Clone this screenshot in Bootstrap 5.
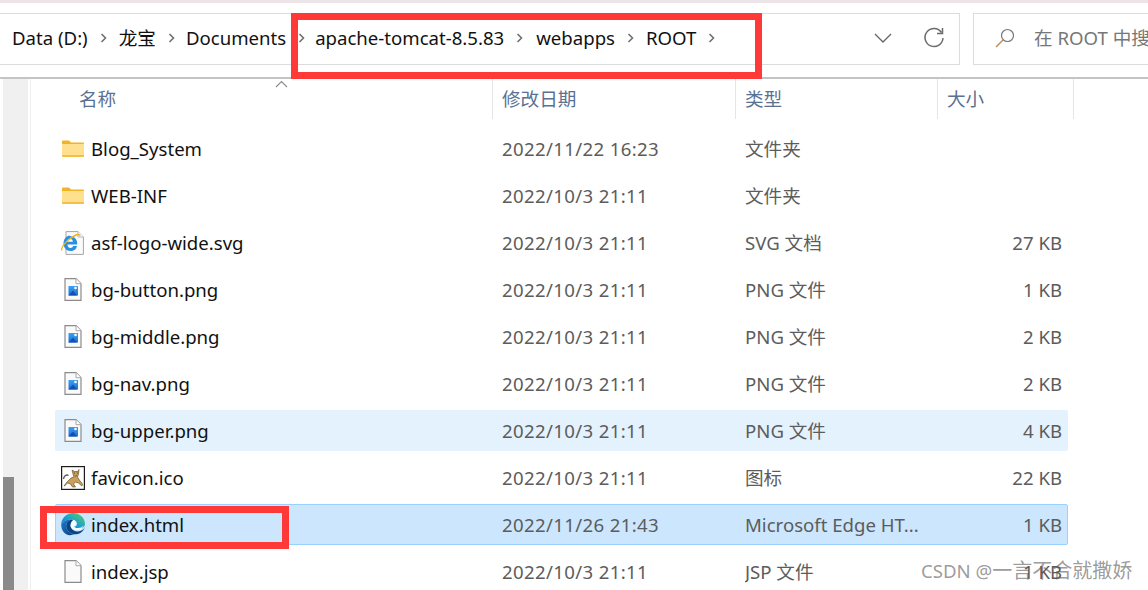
<!DOCTYPE html>
<html lang="zh">
<head>
<meta charset="utf-8">
<title>ROOT</title>
<link href="https://cdn.jsdelivr.net/npm/bootstrap@5.3.0/dist/css/bootstrap.min.css" rel="stylesheet">
<style>
html,body{width:1148px;height:590px;overflow:hidden;margin:0;background:#fff}
body{font-family:"Noto Sans","Noto Sans CJK SC",sans-serif;font-size:18.6px;color:#111;position:relative}
.top-stripe{height:3px;background:#ece4e6}
.tool-area{height:76px;padding:10px 0 0 0;border-bottom:2px solid #c4c4c4;gap:13px}
.addr-box{width:961px;height:52px;margin-left:-1px;border:1.5px solid #dcdcdc;border-left:0;padding-left:13px;padding-bottom:2px}
.crumb-sep{width:7px;height:10px;margin:0 11px 0 12px;flex:none}
.crumb-sep.gap-p1{margin-right:12px}
.crumb-sep.gap-m1{margin-right:10px}
.crumb-sep.gap-p2{margin-right:13px}
.chev{flex:none;margin-left:auto}
.refresh{flex:none;margin-left:31px;margin-right:14px}
.search-box{flex:1;height:52px;border:1.5px solid #dcdcdc;border-right:0;padding-left:21px;padding-bottom:2px;color:#777;white-space:nowrap;overflow:hidden}
.search-ico{flex:none;margin-right:19px}
.main-area{height:511px;overflow:hidden}
.track{width:25px;margin-left:3px;background:#f0f0f0;flex:none;position:relative}
.thumb{position:absolute;left:0;top:398px;width:11px;bottom:0;background:#8a8a8a}
.pane{flex:1;margin-left:2px;border-left:1px solid #eeeeee;min-width:0}
.head-row{height:40px;color:#5a7192;padding-left:48px;position:relative}
.hcell{height:100%;padding-top:6px;flex:none;line-height:28px}
.hname{width:413px}.hdate{width:243px}.htype{width:202px}.hsize{width:137px;border-right:1px solid #e5e5e5}
.hcell+.hcell{border-left:1px solid #e5e5e5;padding-left:9px}
.sort-caret{position:absolute;left:244px;top:1px}
.rows{padding-left:24px;padding-top:9px;width:1037px}
.frow{height:41px;margin-bottom:6px;border:1px solid transparent;border-radius:2px;white-space:nowrap}
.frow.hov{background:#e3f2fd}
.frow.sel{background:#cbe6fd;border-color:#99d1ff}
.fico{width:35px;flex:none;height:30px;padding-left:4px}
.fico.ind-f{padding-left:6px}
.fico.ind-p{padding-left:8px}
.fico.ind-i{padding-left:5px}
.fname{width:411px;flex:none}
.fdate{width:243px;flex:none;color:#5c5c5c;letter-spacing:.36px}
.ftype{width:200px;flex:none;color:#5c5c5c;overflow:hidden}
.fsize{width:123px;flex:none;text-align:right;color:#5c5c5c;padding-right:6px}
.red-a,.red-b{position:absolute;border:7px solid #ff3838;pointer-events:none}
.red-a{left:291px;top:13px;width:471px;height:66px}
.red-b{left:40px;top:506px;width:249px;height:43px}
.wmark{position:absolute;left:921px;top:558px;font-size:18.6px;color:rgba(90,90,90,.62);white-space:nowrap;line-height:26px}
.wmark-cjk{font-size:20px}
</style>
</head>
<body>
<svg width="0" height="0" class="d-block position-absolute">
<defs>
<linearGradient id="g-edge-top" x1="0" y1="1" x2="1" y2="0">
<stop offset="0" stop-color="#0f6fc4"/><stop offset=".5" stop-color="#1fa5c8"/><stop offset="1" stop-color="#5fd05c"/>
</linearGradient>
<linearGradient id="g-edge-low" x1="0" y1="0" x2="1" y2="1">
<stop offset="0" stop-color="#1b7dd0"/><stop offset="1" stop-color="#0b3f80"/>
</linearGradient>
<linearGradient id="g-png" x1="0" y1="0" x2="0" y2="1">
<stop offset="0" stop-color="#3aa0f0"/><stop offset="1" stop-color="#1c6fd8"/>
</linearGradient>
<symbol id="i-folder" viewBox="0 0 22 17">
<path d="M0 1.500A1 1 0 0 1 1 .5h6l2 2h12a1 1 0 0 1 1 1V5H0z" fill="#f0b429"/>
<path d="M0 4h22v12a1 1 0 0 1-1 1H1a1 1 0 0 1-1-1z" fill="#fee08f"/>
<path d="M0 15h22v1a1 1 0 0 1-1 1H1a1 1 0 0 1-1-1z" fill="#f3bf45"/>
</symbol>
<symbol id="i-page" viewBox="0 0 18 23">
<path d="M1 .7h11l5 5v16.600H1z" fill="#fafafa" stroke="#8c8c8c" stroke-width="1.200"/>
<path d="M12 .7v5h5" fill="#fff" stroke="#a8a8a8" stroke-width="1"/>
</symbol>
<symbol id="i-png" viewBox="0 0 18 23">
<use href="#i-page"/>
<rect x="4.500" y="8" width="9.500" height="9.500" fill="url(#g-png)"/>
<path d="M4.500 17.500 9 12.500l4 5z" fill="#1350b0"/>
<circle cx="11.500" cy="10" r="1.300" fill="#fff"/>
</symbol>
<symbol id="i-ie" viewBox="0 0 23 24">
<path d="M5 .6h12l5.400 5.400v17.400H5z" fill="#fbfbfb" stroke="#a5a5a5" stroke-width="1"/>
<path d="M17 .6v5.400h5.400" fill="#fff" stroke="#b5b5b5"/>
<path d="M8.500 4.500C5 5 2.500 8.500 2.500 12.500s3 7.500 7 7.500c3.500 0 6-2 6.500-5h-3.800c-.5 1.200-1.400 1.900-2.700 1.900-1.800 0-3-1.400-3.100-3.400H16.200c.5-4.500-2.700-8.500-7.700-8.500zM5.900 10.800c.2-1.800 1.400-3 3-3s2.900 1.200 3 3z" fill="#2a8fe0"/>
<path d="M.8 19.500C-.5 16.500 6 8.500 14 4.500c3-1.500 5-1.400 4.800.4" fill="none" stroke="#efb21a" stroke-width="1.400"/>
</symbol>
<symbol id="i-tomcat" viewBox="0 0 24 24">
<rect x=".6" y=".6" width="22.800" height="22.800" fill="#fff" stroke="#1c1c1c" stroke-width="1.200"/>
<path d="M3 20l3-4 4-4 3-1-1-3-1-4 2.500 1.500h3L18 3.500 17.500 8l-1 3 2.500 4 2.500 3-.5 2-3.500-3-3-1-2 2 2 3h-3l-2-3-3-1-3 3z" fill="#c99f5b" stroke="#5a4220" stroke-width=".6"/>
<path d="M2.500 13c.5-3 3-5 5-3.500" fill="none" stroke="#555" stroke-width="1.300"/>
<path d="M13 7h.9M15.800 7h.9M14 9.500l.8.8.8-.8" stroke="#3a2a14" stroke-width=".9" fill="none"/>
</symbol>
<symbol id="i-edge" viewBox="0 0 24 24">
<path d="M12 0c6.800 0 12 5 12 10.800 0 3.200-2.800 4.800-5.800 4.800-2.400 0-4.600-.8-5.200-1.600 2-.4 3-1.600 3-3.200 0-2.400-2.600-4.200-6-4.200C6 6.600 2.600 8 .2 11 .8 5 5.400 0 12 0z" fill="url(#g-edge-top)"/>
<path d="M.2 11C2.600 8 6 6.600 10 6.600c-3 .8-4.800 3.400-4.800 6.400 0 4 3.600 8 8.600 8.300-.6.200-1.200.3-1.800.3C5.400 24 0 18.600.2 11z" fill="url(#g-edge-low)"/>
<path d="M10 6.600c-3 .8-4.800 3.400-4.800 6.400 0 4 3.600 8 8.600 8.300 4.800.2 8.800-2.800 10-7.300-1.400 3-4 4.600-7.400 4.400-3.800-.2-6.800-2.800-6.800-6 0-2.500 1.400-4.400 3.200-5.300-.7-.3-1.700-.5-2.800-.5z" fill="#0c4488"/>
<path d="M9.600 12.400c0-2.500 1.400-4.400 3.200-5.300 1.300.7 2.200 1.800 2.200 3.100 0 1.600-1 2.800-3 3.200.6.800 2.800 1.600 5.200 1.600 2.300 0 4.200-.8 5.200-2.500-.5 2-1.500 3-2.900 3.900-1 .4-2.200.7-3.500.6-3.800-.2-6.400-2-6.400-4.600z" fill="#f7fcff"/>
</symbol>
<symbol id="i-sep" viewBox="0 0 7 10">
<path d="M1.500 1 5.500 5l-4 4" fill="none" stroke="#707070" stroke-width="1.600"/>
</symbol>
</defs>
</svg>

<div class="top-stripe"></div>
<div class="tool-area d-flex">
  <div class="addr-box d-flex align-items-center">
    <span>Data (D:)</span><svg class="crumb-sep gap-p1"><use href="#i-sep"/></svg>
    <span>龙宝</span><svg class="crumb-sep"><use href="#i-sep"/></svg>
    <span>Documents</span><svg class="crumb-sep gap-m1"><use href="#i-sep"/></svg>
    <span>apache-tomcat-8.5.83</span><svg class="crumb-sep gap-p2"><use href="#i-sep"/></svg>
    <span>webapps</span><svg class="crumb-sep gap-p1"><use href="#i-sep"/></svg>
    <span>ROOT</span><svg class="crumb-sep"><use href="#i-sep"/></svg>
    <svg class="chev" width="18" height="10" viewBox="0 0 18 10"><path d="M1 1l8 8 8-8" fill="none" stroke="#666" stroke-width="1.300"/></svg>
    <svg class="refresh" width="22" height="22" viewBox="0 0 22 22"><path d="M18.500 5.500A9 9 0 1 0 20 11" fill="none" stroke="#6b6b6b" stroke-width="1.500"/><path d="M19.500 1v5.500H14" fill="none" stroke="#6b6b6b" stroke-width="1.500"/></svg>
  </div>
  <div class="search-box d-flex align-items-center">
    <svg class="search-ico" width="20" height="20" viewBox="0 0 20 20"><circle cx="12.500" cy="7.500" r="6" fill="none" stroke="#777" stroke-width="1.200"/><path d="M8 12 1 19" stroke="#c08a5a" stroke-width="1.400"/></svg>
    <span>在 ROOT 中搜索</span>
  </div>
</div>
<div class="main-area d-flex">
  <div class="track"><div class="thumb"></div></div>
  <div class="pane">
    <div class="head-row d-flex">
      <div class="hcell hname">名称</div>
      <div class="hcell hdate">修改日期</div>
      <div class="hcell htype">类型</div>
      <div class="hcell hsize">大小</div>
      <svg class="sort-caret" width="13" height="8" viewBox="0 0 13 8"><path d="M1 7l5.500-5.500L12 7" fill="none" stroke="#8a8a8a" stroke-width="1.100"/></svg>
    </div>
    <div class="rows">
      <div class="frow d-flex align-items-center"><div class="fico ind-f d-flex align-items-center"><svg width="22" height="17"><use href="#i-folder"/></svg></div><div class="fname">Blog_System</div><div class="fdate">2022/11/22 16:23</div><div class="ftype">文件夹</div><div class="fsize"></div></div>
      <div class="frow d-flex align-items-center"><div class="fico ind-f d-flex align-items-center"><svg width="22" height="17"><use href="#i-folder"/></svg></div><div class="fname">WEB-INF</div><div class="fdate">2022/10/3 21:11</div><div class="ftype">文件夹</div><div class="fsize"></div></div>
      <div class="frow d-flex align-items-center"><div class="fico ind-i d-flex align-items-center"><svg width="23" height="24"><use href="#i-ie"/></svg></div><div class="fname">asf-logo-wide.svg</div><div class="fdate">2022/10/3 21:11</div><div class="ftype">SVG 文档</div><div class="fsize">27 KB</div></div>
      <div class="frow d-flex align-items-center"><div class="fico ind-p d-flex align-items-center"><svg width="18" height="23"><use href="#i-png"/></svg></div><div class="fname">bg-button.png</div><div class="fdate">2022/10/3 21:11</div><div class="ftype">PNG 文件</div><div class="fsize">1 KB</div></div>
      <div class="frow d-flex align-items-center"><div class="fico ind-p d-flex align-items-center"><svg width="18" height="23"><use href="#i-png"/></svg></div><div class="fname">bg-middle.png</div><div class="fdate">2022/10/3 21:11</div><div class="ftype">PNG 文件</div><div class="fsize">2 KB</div></div>
      <div class="frow d-flex align-items-center"><div class="fico ind-p d-flex align-items-center"><svg width="18" height="23"><use href="#i-png"/></svg></div><div class="fname">bg-nav.png</div><div class="fdate">2022/10/3 21:11</div><div class="ftype">PNG 文件</div><div class="fsize">2 KB</div></div>
      <div class="frow hov d-flex align-items-center"><div class="fico ind-p d-flex align-items-center"><svg width="18" height="23"><use href="#i-png"/></svg></div><div class="fname">bg-upper.png</div><div class="fdate">2022/10/3 21:11</div><div class="ftype">PNG 文件</div><div class="fsize">4 KB</div></div>
      <div class="frow d-flex align-items-center"><div class="fico ind-i d-flex align-items-center"><svg width="24" height="24"><use href="#i-tomcat"/></svg></div><div class="fname">favicon.ico</div><div class="fdate">2022/10/3 21:11</div><div class="ftype">图标</div><div class="fsize">22 KB</div></div>
      <div class="frow sel d-flex align-items-center"><div class="fico ind-i d-flex align-items-center"><svg width="24" height="24"><use href="#i-edge"/></svg></div><div class="fname">index.html</div><div class="fdate">2022/11/26 21:43</div><div class="ftype">Microsoft Edge HT...</div><div class="fsize">1 KB</div></div>
      <div class="frow d-flex align-items-center"><div class="fico ind-p d-flex align-items-center"><svg width="18" height="23"><use href="#i-page"/></svg></div><div class="fname">index.jsp</div><div class="fdate">2022/10/3 21:11</div><div class="ftype">JSP 文件</div><div class="fsize">1 KB</div></div>
    </div>
  </div>
</div>
<div class="red-a"></div>
<div class="red-b"></div>
<div class="wmark">CSDN @<span class="wmark-cjk">一言不合就撒娇</span></div>
<script src="https://cdn.jsdelivr.net/npm/bootstrap@5.3.0/dist/js/bootstrap.bundle.min.js"></script>
</body>
</html>
